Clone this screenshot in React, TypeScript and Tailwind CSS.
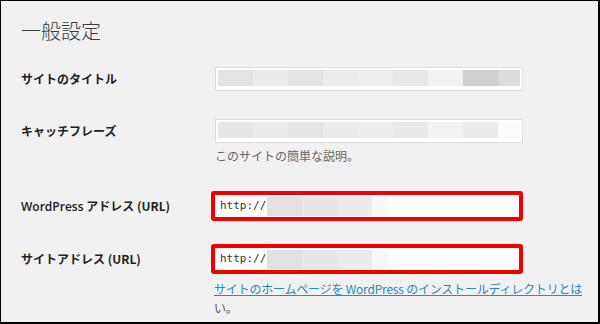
const jp = { fontFamily: '"Noto Sans CJK JP", "Noto Sans", sans-serif' };
const mono = { fontFamily: '"DejaVu Sans Mono", "Liberation Mono", monospace' };

const titleBlocks = ["#e3e3e3", "#eaebea", "#e4e4e4", "#ececec", "#eeeeee", "#e8e8e8", "#f2f2f2", "#cfd0cf", "#dcdcdc"];
const phraseBlocks = ["#e6e6e6", "#ebebeb", "#e5e5e5", "#ebebeb", "#ededed", "#e9e9e9", "#f3f3f3", "#ebebeb", "#fbfbfb"];
const urlBlocks = ["#e1e1e1", "#e7e7e7", "#ebebeb"];

function BlurInput({ blocks }: { blocks: string[] }) {
  return (
    <div className="h-[24px] w-[308px] border border-[#dcdcdc] bg-white p-[2px] pb-[4px]">
      <div className="flex h-full">
        {blocks.map((c, i) => (
          <div key={i} className={i === blocks.length - 1 ? "h-full flex-1" : "h-full w-[35px]"} style={{ backgroundColor: c }} />
        ))}
      </div>
    </div>
  );
}

function UrlInput() {
  return (
    <div className="h-[30px] w-[312px] rounded-[3px] border-[4px] border-[#f20000] bg-white">
      <div className="flex h-full items-center pl-[5px]">
        <span className="text-[11px] text-[#333]" style={mono}>
          http://
        </span>
        <div className="ml-[1px] flex h-[19px]">
          {urlBlocks.map((c, i) => (
            <div key={i} className="h-full w-[35px]" style={{ backgroundColor: c }} />
          ))}
          <div className="h-full w-[16px] bg-[#f8f8f8]" />
        </div>
      </div>
    </div>
  );
}

export default function App() {
  return (
    <div
      className="h-[324px] w-[600px] overflow-hidden border-t border-l border-r-2 border-b-2 border-black bg-[#f1f1f1]"
      style={jp}
    >
      <h1 className="ml-[20px] mt-[16px] text-[20px] leading-[28px] font-light text-[#3a3a3a]">一般設定</h1>

      <div className="mt-[22px] flex items-center">
        <div className="w-[214px] shrink-0 pl-[20px] text-[12px] font-bold text-[#222]">サイトのタイトル</div>
        <BlurInput blocks={titleBlocks} />
      </div>

      <div className="mt-[28px] flex">
        <div className="flex h-[24px] w-[214px] shrink-0 items-center pl-[20px] text-[12px] font-bold text-[#222]">キャッチフレーズ</div>
        <div>
          <BlurInput blocks={phraseBlocks} />
          <p className="mt-[5px] text-[12px] leading-[16px] text-[#666]">このサイトの簡単な説明。</p>
        </div>
      </div>

      <div className="mt-[27px] flex items-center">
        <div className="w-[210px] shrink-0 pl-[20px] text-[12px] font-bold text-[#222]">
          <span style={{ fontFamily: '"Open Sans", "Noto Sans CJK JP", sans-serif' }} className="font-semibold">WordPress</span> アドレス (URL)
        </div>
        <UrlInput />
      </div>

      <div className="mt-[23px] flex">
        <div className="flex h-[30px] w-[210px] shrink-0 items-center pl-[20px] text-[12px] font-bold text-[#222]">サイトアドレス (URL)</div>
        <div>
          <UrlInput />
          <p className="ml-[3px] mt-[5px] whitespace-nowrap text-[12px] leading-[19px] tracking-[-0.2px] text-[#555]">
            <a className="text-[#2a8ab8] underline">サイトのホームページを WordPress のインストールディレクトリとは</a>
            <br />い。
          </p>
        </div>
      </div>
    </div>
  );
}
